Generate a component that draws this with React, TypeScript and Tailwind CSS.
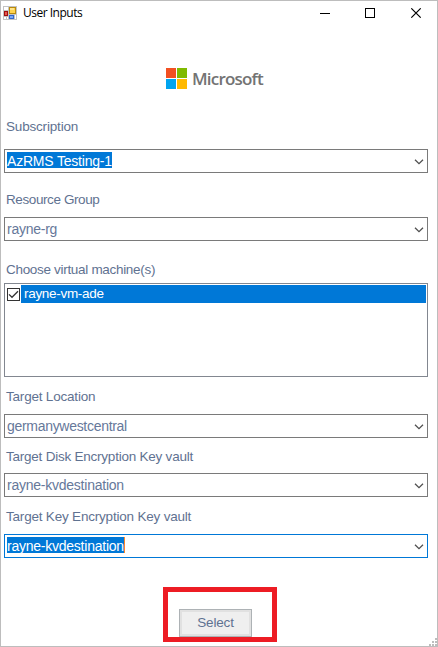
import type { ReactNode } from "react";

function Chevron() {
  return (
    <svg width="10" height="6" viewBox="0 0 10 6" className="mr-[3px] mt-px shrink-0" fill="none" stroke="#505050" strokeWidth="1.3">
      <path d="M1 0.8 L5 4.6 L9 0.8" />
    </svg>
  );
}

function Label({ className, children }: { className: string; children: ReactNode }) {
  return (
    <div className={`ml-0.5 h-4 whitespace-nowrap text-[13.5px] leading-4 text-[#5f7291] ${className}`}>{children}</div>
  );
}

interface ComboProps {
  value: string;
  className?: string;
  textClass: string;
  selected?: boolean;
  focused?: boolean;
}

function Combo({ value, className = "", textClass, selected, focused }: ComboProps) {
  return (
    <div
      className={`flex h-6 w-[424px] items-center justify-between border bg-white pl-0.5 ${
        focused ? "border-[#0078d7]" : "border-[#7a7a7a]"
      } ${className}`}
    >
      <span
        className={`mb-0.5 h-4 whitespace-nowrap text-[14px] leading-[18px] ${textClass} ${
          selected ? "bg-[#0078d7] text-white" : "text-[#66789a]"
        } ${focused ? "border-r border-[#ff8728]" : ""}`}
      >
        {value}
      </span>
      <Chevron />
    </div>
  );
}

function AppIcon() {
  return (
    <svg width="14" height="14" viewBox="0 0 14 14" shapeRendering="crispEdges">
      <path fill="#c3c3c3" d="M0 0h14v14H0z" />
      <path fill="#fff" d="M1 1h4v3H1zM1 11h2v2H1zM4 11h1v2H4zM12 9h1v4h-1z" />
      <path fill="#b98a0c" d="M6 1h7v7H6z" />
      <path fill="#ffd34d" d="M7 2h5v5H7z" />
      <path fill="#ffe58c" d="M7 2h4v2H7z" />
      <path fill="#a10d0d" d="M1 5h4v5H1z" />
      <path fill="#e4564d" d="M2 6h2v3H2z" />
      <path fill="#3465c8" d="M6 9h5v4H6z" />
      <path fill="#78a8f8" d="M7 10h3v2H7z" />
    </svg>
  );
}

function TitleBar() {
  return (
    <header className="flex h-6 shrink-0 items-center pl-0.5 pr-[15px]">
      <AppIcon />
      <span className="ml-1.5 grow font-['Open_Sans','Noto_Sans',sans-serif] text-[12px] leading-4 tracking-[-0.5px] text-black">
        User Inputs
      </span>
      <svg width="102" height="10" viewBox="0 0 102 10" fill="none" stroke="#000">
        <path d="M0 5.5h10" shapeRendering="crispEdges" />
        <path d="M45.5 0.5h9v9h-9z" shapeRendering="crispEdges" />
        <path d="M91.3 0.3l9.4 9.4M100.7 0.3l-9.4 9.4" strokeWidth="1.1" />
      </svg>
    </header>
  );
}

function Logo() {
  return (
    <div className="ml-[162px] mt-[43px] flex h-[21px] items-center">
      <div className="grid grid-cols-[10px_10px] grid-rows-[10px_10px] gap-px">
        <i className="bg-[#f25022]" />
        <i className="bg-[#7fba00]" />
        <i className="bg-[#00a4ef]" />
        <i className="bg-[#ffb900]" />
      </div>
      <span className="ml-[5px] font-['Open_Sans',sans-serif] text-[17px] font-semibold leading-[21px] tracking-[-0.8px] text-[#737373]">
        Microsoft
      </span>
    </div>
  );
}

export default function App() {
  return (
    <main className="relative flex h-[647px] w-[438px] flex-col overflow-hidden border border-[#bdbdbd] bg-white font-['Liberation_Sans',Arial,sans-serif] text-[13.5px]">
      <TitleBar />
      <div className="ml-[3px] flex flex-col">
        <Logo />

        <Label className="mt-[30px] tracking-[-0.18px]">Subscription</Label>
        <Combo className="mt-3.5" value="AzRMS Testing-1" textClass="tracking-[-0.2px]" selected />

        <Label className="mt-[19px] tracking-[-0.4px]">Resource Group</Label>
        <Combo className="mt-[9px]" value="rayne-rg" textClass="tracking-[-0.25px]" />

        <Label className="mt-[21px] tracking-[-0.31px]">Choose virtual machine(s)</Label>
        <div className="mt-[5px] h-[94px] w-[424px] border border-[#828790] p-px">
          <div className="flex h-[18px] items-center">
            <span className="ml-px flex size-[13px] shrink-0 items-center justify-center border border-[#333]">
              <svg width="11" height="11" viewBox="0 0 11 11" fill="none" stroke="#333" strokeWidth="1.3">
                <path d="M1 5.4 L4 8.3 L10 2.3" />
              </svg>
            </span>
            <span className="ml-px flex h-[18px] grow items-center bg-[#0078d7] pl-[3px] leading-4 tracking-[-0.3px] text-white">
              rayne-vm-ade
            </span>
          </div>
        </div>

        <Label className="mt-3 tracking-[-0.2px]">Target Location</Label>
        <Combo className="mt-[9px]" value="germanywestcentral" textClass="tracking-[-0.3px]" />

        <Label className="mt-[11px] tracking-[-0.23px]">Target Disk Encryption Key vault</Label>
        <Combo className="mt-2" value="rayne-kvdestination" textClass="tracking-[-0.24px]" />

        <Label className="mt-3 tracking-[-0.2px]">Target Key Encryption Key vault</Label>
        <Combo className="mt-[9px]" value="rayne-kvdestination" textClass="tracking-[-0.24px]" selected focused />

        <div className="ml-[159px] mt-[29px] h-[55px] w-[114px] border-[5px] border-[#ed1c24] pl-[11px] pt-[17px]">
          <button className="flex h-7 w-[73px] items-center justify-center border border-[#adb2b5] bg-[#efefef] leading-4 tracking-[-0.15px] text-[#5f7291] shadow-[inset_0_0_0_2px_#e1e1e1]">
            Select
          </button>
        </div>
      </div>

      <svg className="absolute bottom-0 right-0" width="8" height="8" viewBox="0 0 8 8" fill="#bdbdbd" shapeRendering="crispEdges">
        <path d="M6 0h2v2H6zM3 3h2v2H3zM6 3h2v2H6zM0 6h2v2H0zM3 6h2v2H3zM6 6h2v2H6z" />
      </svg>
    </main>
  );
}
